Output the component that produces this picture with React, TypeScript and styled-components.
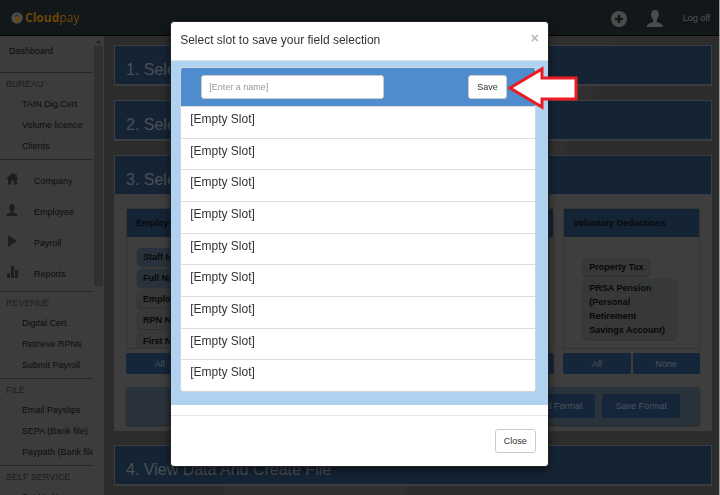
import React from "react";
import styled, { createGlobalStyle, css } from "styled-components";

const GlobalStyle = createGlobalStyle`
  * { box-sizing: border-box; }
  html, body, #root { height: 100%; }
  body {
    margin: 0;
    overflow: hidden;
    background: #2e2e2e;
    font-family: "Liberation Sans", Arial, sans-serif;
    font-size: 9px;
    line-height: 14px;
    color: #0c0c0c;
  }
  button, input { font: inherit; }
  a { color: inherit; text-decoration: none; }
  h1, h2, h3, ul { margin: 0; padding: 0; font-weight: normal; }
  ul { list-style: none; }
`;

const Page = styled.div`
  display: flex;
  flex-direction: column;
  height: 100vh;
  overflow: hidden;
  border-right: 1px solid #9a9a9a;
`;

const TopBar = styled.header`
  display: flex;
  flex: none;
  align-items: center;
  justify-content: space-between;
  height: 36px;
  padding: 0 9px 0 11px;
  background: #12181a;
  border-bottom: 1px solid #040404;
`;

const Brand = styled.a`
  display: flex;
  align-items: center;
  gap: 2px;
  color: #6b4608;
  font-family: "Open Sans", "Liberation Sans", sans-serif;
  font-size: 12px;
  line-height: 16px;
`;

const Account = styled.div`
  display: flex;
  align-items: center;
  gap: 20px;
  color: #555;
`;

const IconButton = styled.button`
  display: flex;
  padding: 2px 0 0;
  border: 0;
  background: none;
  color: #4c4c4c;
`;

const Columns = styled.div`
  display: flex;
  flex: 1;
  min-height: 0;
`;

const Sidebar = styled.nav`
  display: flex;
  flex: none;
  width: 104px;
  background: #3c3c3c;
  overflow: hidden;
`;

const Menu = styled.div`
  flex: 1;
  min-width: 0;
  overflow: hidden;
  white-space: nowrap;
`;

const Track = styled.div`
  display: flex;
  flex-direction: column;
  align-items: center;
  flex: none;
  width: 11px;
  padding-top: 4px;
  gap: 3px;
`;

const Thumb = styled.div`
  width: 9px;
  height: 240px;
  background: #303030;
`;

const MenuTop = styled.a`
  display: block;
  height: 36px;
  padding: 8px 9px;
`;

const Section = styled.section<{ $wide?: boolean }>`
  border-top: 1px solid #262626;
  padding: ${(p) => (p.$wide ? "5px 0 2px" : "1px 0 2px")};
`;

const SectionTitle = styled.h2`
  padding-left: 6px;
  color: #1c1c1c;
  font-size: 9px;
  line-height: 20px;
`;

const MenuLink = styled.a`
  display: block;
  padding-left: 22px;
  line-height: 21px;
`;

const IconLink = styled.a`
  display: grid;
  grid-template-columns: 28px 1fr;
  align-items: center;
  height: 31px;
  padding-left: 6px;

  svg { color: #1e1e1e; margin-top: -4px; }
`;

const Main = styled.main`
  display: flex;
  flex: 1;
  flex-direction: column;
  gap: 14px;
  min-width: 0;
  padding: 9px 7px 0 10px;
  background: linear-gradient(115deg, #2c2c2c 0 40%, #303030 40% 62%, #2d2d2d 62%);
`;

const Panel = styled.section`
  flex: none;
  background: #3e3e3e;
  border-radius: 2px;
`;

const PanelTitle = styled.h2`
  padding: 13px 11px 3px;
  background: #152435;
  border: 1px solid #3b3d40;
  border-bottom-width: 2px;
  color: #4a5056;
  font-size: 16px;
  line-height: 22px;
`;

const PanelBody = styled.div`
  display: grid;
  grid-template-columns: repeat(4, 1fr);
  gap: 13px 9px;
  padding: 12px 12px 6px;
`;

const FieldGroup = styled.div`
  display: flex;
  flex-direction: column;
  gap: 4px;
  min-width: 0;
`;

const FieldBox = styled.div`
  height: 141px;
  overflow: hidden;
  border: 1px solid #343434;
  border-radius: 2px;
`;

const FieldTitle = styled.h3`
  padding: 7px 9px;
  background: #152435;
  color: #07090c;
  font-size: 9px;
  font-weight: bold;
  line-height: 14px;
`;

const Chips = styled.ul<{ $inset?: boolean }>`
  display: flex;
  flex-direction: column;
  align-items: flex-start;
  gap: 3px;
  padding: ${(p) => (p.$inset ? "21px 22px 0 19px" : "11px 10px 0")};
`;

const Chip = styled.li<{ $picked?: boolean }>`
  padding: 2px 6px 2px;
  border-radius: 5px;
  background: ${(p) => (p.$picked ? "#29323c" : "#373939")};
  box-shadow: 0 1px 2px #2b2d2f;
  color: #080808;
  font-weight: bold;
`;

const Pair = styled.div`
  display: grid;
  grid-template-columns: 1fr 1fr;
  gap: 2px;
`;

const BlueButton = styled.button`
  padding: 4px 12px 2px;
  border: 0;
  border-radius: 2px;
  background: #15263a;
  color: #4c545c;
  line-height: 15px;
`;

const FormatBar = styled.div`
  display: flex;
  grid-column: 1 / -1;
  justify-content: flex-end;
  gap: 7px;
  padding: 7px 20px;
  border-radius: 3px;
  background: #2a323b;
  box-shadow: 0 1px 2px #22262a;

  ${BlueButton} { padding: 5px 13px 4px; }
`;

const Overlay = styled.div`
  position: fixed;
  inset: 0;
  display: flex;
  justify-content: center;
  align-items: flex-start;
  padding: 21px 0 0;
`;

const Dialog = styled.div`
  width: 52.6%;
  margin-right: 1px;
  border: 1px solid #222;
  border-radius: 4px;
  background: #fff;
  box-shadow: 0 3px 9px rgba(0, 0, 0, 0.6);
  color: #333;
`;

const DialogHead = styled.div`
  display: flex;
  align-items: flex-start;
  justify-content: space-between;
  padding: 10px 9px 11px;
  border-bottom: 1px solid #dde3e9;
`;

const DialogTitle = styled.h1`
  font-size: 12px;
  line-height: 17px;
`;

const Dismiss = styled.button`
  padding: 0;
  border: 0;
  background: none;
  color: #bbb;
  font-size: 14px;
  font-weight: bold;
  line-height: 12px;
`;

const DialogBody = styled.div`
  padding: 6px 12px 13px 9px;
  background: #b0d1f0;
`;

const SlotTable = styled.div`
  overflow: hidden;
  border: 1px solid #ccd6df;
  border-radius: 3px;
  background: #fff;
`;

const NameRow = styled.form`
  display: flex;
  align-items: center;
  justify-content: space-between;
  padding: 7px 28px 7px 20px;
  background: #4e8ccd;
`;

const boxed = css`
  height: 24px;
  border: 1px solid #ccc;
  border-radius: 3px;
  background: #fff;
  color: #333;
`;

const NameInput = styled.input`
  ${boxed}
  width: 183px;
  padding: 0 7px;

  &::placeholder { color: #999; opacity: 1; }
`;

const PlainButton = styled.button`
  ${boxed}
  padding: 0 8px;
`;

const Slot = styled.li`
  height: 32px;
  padding: 4px 9px;
  border-top: 1px solid #ddd;
  font-size: 12px;
  line-height: 17px;

  &:nth-child(3n + 2) { height: 31px; }
`;

const DialogFoot = styled.div`
  display: flex;
  justify-content: flex-end;
  margin-top: 10px;
  padding: 13px 12px;
  border-top: 1px solid #e5e5e5;
`;

const Pointer = styled.svg`
  position: absolute;
  left: calc(50% + 147px);
  top: 65px;
`;

const PersonIcon = ({ w, h }: { w: number; h: number }) => (
  <svg width={w} height={h} viewBox="0 0 16 17" fill="currentColor" aria-hidden="true">
    <path d="M8 0C5.400 0 4.200 1.900 4.200 4.500c0 2 .7 4 2 5.100v1.600c0 .8-.5 1.100-1.300 1.400C2.300 13.600 0 14 0 17h16c0-3-2.300-3.400-4.900-4.400-.8-.3-1.300-.6-1.300-1.400V9.600c1.300-1.100 2-3.100 2-5.100C11.800 1.900 10.600 0 8 0z" />
  </svg>
);

const HomeIcon = () => (
  <svg width="13" height="13" viewBox="0 0 13 12" fill="currentColor" aria-hidden="true">
    <path d="M6.500 0 0 6.500h2V12h3.200V8h2.600v4H11V6.500h2L10.500 4V1H9v1.500z" />
  </svg>
);

const PlayIcon = () => (
  <svg width="13" height="12" viewBox="0 0 13 12" fill="currentColor" aria-hidden="true">
    <path d="M2 0v12l9-6z" />
  </svg>
);

const BarsIcon = () => (
  <svg width="13" height="12" viewBox="0 0 13 12" fill="currentColor" aria-hidden="true">
    <path d="M1 7h3v5H1zM5 0h3v12H5zM9 4h3v8H9z" />
  </svg>
);

const LogoIcon = () => (
  <svg width="12" height="12" viewBox="0 0 12 12" aria-hidden="true">
    <circle cx="6" cy="6" r="5.700" fill="#4b4d4e" />
    <path d="M3.500 5 8 4l.8 5.500-4.800 1z" fill="#6d480f" />
    <path d="M4.800 5C4.500 2.200 6.500 1.500 7.200 4.300" fill="none" stroke="#1d2a33" strokeWidth="1" />
  </svg>
);

const sections = {
  bureau: ["TAIN Dig.Cert", "Volume licence", "Clients"],
  revenue: ["Digital Cert", "Retrieve RPNs", "Submit Payroll"],
  file: ["Email Payslips", "SEPA (Bank file)", "Paypath (Bank file)"],
  self: ["Set Up User"],
};

const groups = [
  {
    title: "Employee Details",
    inset: false,
    chips: [
      { text: "Staff No.", picked: true },
      { text: "Full Name", picked: true },
      { text: "Employee Group" },
      { text: "RPN Number" },
      { text: "First Name" },
    ],
  },
  { title: "Payments", inset: false, chips: [] },
  { title: "Deductions", inset: false, chips: [] },
  {
    title: "Voluntary Deductions",
    inset: true,
    chips: [{ text: "Property Tax" }, { text: "PRSA Pension (Personal Retirement Savings Account)" }],
  },
] as { title: string; inset: boolean; chips: { text: string; picked?: boolean }[] }[];

const MenuSection = ({ title, items }: { title: string; items: string[] }) => (
  <Section>
    <SectionTitle>{title}</SectionTitle>
    {items.map((item) => (
      <MenuLink href="#" key={item}>{item}</MenuLink>
    ))}
  </Section>
);

export default function App() {
  return (
    <>
      <GlobalStyle />
      <Page>
        <TopBar>
          <Brand href="#">
            <LogoIcon />
            <span><b>Cloud</b>pay</span>
          </Brand>
          <Account>
            <IconButton aria-label="Add">
              <svg width="16" height="16" viewBox="0 0 16 16" aria-hidden="true">
                <circle cx="8" cy="8" r="8" fill="currentColor" />
                <path d="M8 4v8M4 8h8" stroke="#12181a" strokeWidth="2.600" />
              </svg>
            </IconButton>
            <IconButton aria-label="Account"><PersonIcon w={16} h={17} /></IconButton>
            <a href="#">Log off</a>
          </Account>
        </TopBar>
        <Columns>
          <Sidebar>
            <Menu>
              <MenuTop href="#">Dashboard</MenuTop>
              <MenuSection title="BUREAU" items={sections.bureau} />
              <Section $wide>
                <IconLink href="#"><HomeIcon />Company</IconLink>
                <IconLink href="#"><PersonIcon w={12} h={12} />Employee</IconLink>
                <IconLink href="#"><PlayIcon />Payroll</IconLink>
                <IconLink href="#"><BarsIcon />Reports</IconLink>
              </Section>
              <MenuSection title="REVENUE" items={sections.revenue} />
              <MenuSection title="FILE" items={sections.file} />
              <MenuSection title="SELF SERVICE" items={sections.self} />
            </Menu>
            <Track>
              <svg width="5" height="3" viewBox="0 0 5 3" aria-hidden="true"><path d="M0 3 2.500 0 5 3z" fill="#1c1c1c" /></svg>
              <Thumb />
            </Track>
          </Sidebar>
          <Main>
            <Panel><PanelTitle>1. Select Period</PanelTitle></Panel>
            <Panel><PanelTitle>2. Select Employees</PanelTitle></Panel>
            <Panel>
              <PanelTitle>3. Select Fields</PanelTitle>
              <PanelBody>
                {groups.map((group) => (
                  <FieldGroup key={group.title}>
                    <FieldBox>
                      <FieldTitle>{group.title}</FieldTitle>
                      <Chips $inset={group.inset}>
                        {group.chips.map((chip) => (
                          <Chip key={chip.text} $picked={chip.picked}>{chip.text}</Chip>
                        ))}
                      </Chips>
                    </FieldBox>
                    <Pair>
                      <BlueButton>All</BlueButton>
                      <BlueButton>None</BlueButton>
                    </Pair>
                  </FieldGroup>
                ))}
                <FormatBar>
                  <BlueButton>Load Format</BlueButton>
                  <BlueButton>Save Format</BlueButton>
                </FormatBar>
              </PanelBody>
            </Panel>
            <Panel><PanelTitle>4. View Data And Create File</PanelTitle></Panel>
          </Main>
        </Columns>
      </Page>
      <Overlay>
        <Dialog role="dialog" aria-modal="true" aria-labelledby="slot-title">
          <DialogHead>
            <DialogTitle id="slot-title">Select slot to save your field selection</DialogTitle>
            <Dismiss aria-label="Dismiss">×</Dismiss>
          </DialogHead>
          <DialogBody>
            <SlotTable>
              <NameRow onSubmit={(e) => e.preventDefault()}>
                <NameInput type="text" aria-label="Slot name" placeholder="[Enter a name]" />
                <PlainButton type="submit">Save</PlainButton>
              </NameRow>
              <ul>
                {Array.from({ length: 9 }, (_, i) => (
                  <Slot key={i}>[Empty Slot]</Slot>
                ))}
              </ul>
            </SlotTable>
          </DialogBody>
          <DialogFoot>
            <PlainButton type="button">Close</PlainButton>
          </DialogFoot>
        </Dialog>
        <Pointer width="72" height="46" viewBox="0 0 72 46" aria-hidden="true">
          <path d="M3 23 35 4v9h34v21H35v8z" fill="#fff" stroke="#ed1c24" strokeWidth="3" />
        </Pointer>
      </Overlay>
    </>
  );
}
